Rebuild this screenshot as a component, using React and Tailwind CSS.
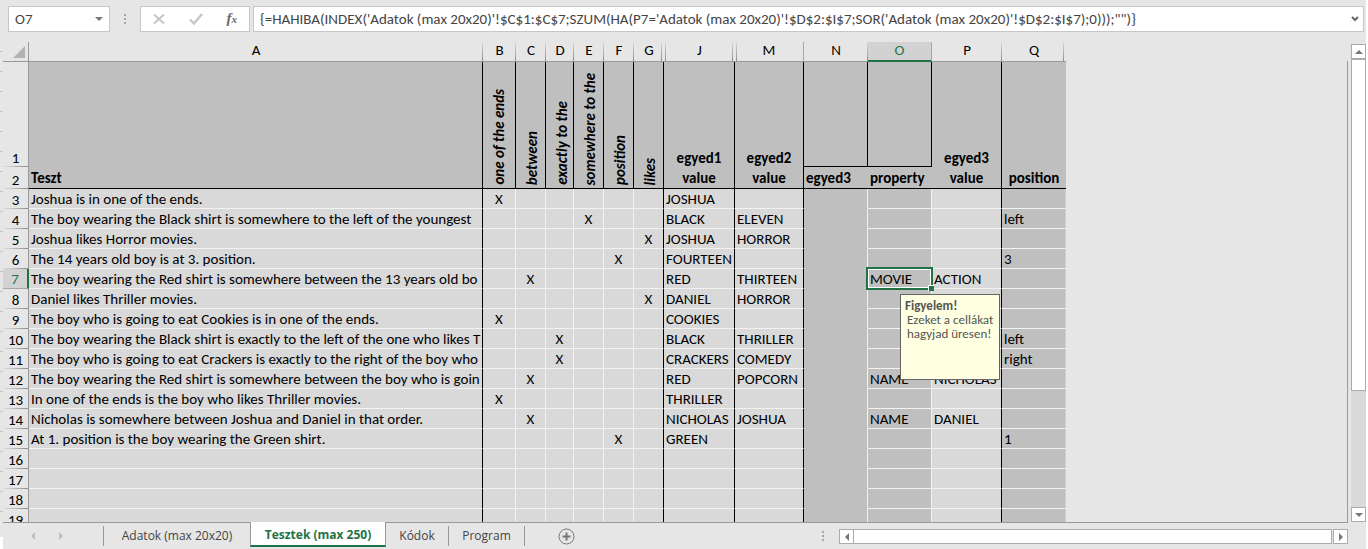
import React from "react";

const SANS = "font-['Carlito','Calibri','Lato',sans-serif]";
const CHROME = "font-['Open_Sans','Noto_Sans',sans-serif]";

const lineRight = "bg-[linear-gradient(to_bottom,#dcdcdc,#8c8c8c)] bg-[length:1px_100%] bg-[position:right_top] bg-no-repeat";
const lineRightInset = "bg-[linear-gradient(to_bottom,#dcdcdc,#8c8c8c)] bg-[length:1px_100%] bg-[position:right_2px_top] bg-no-repeat";
const lineLeft = "bg-[linear-gradient(to_bottom,#dcdcdc,#8c8c8c)] bg-[length:1px_100%] bg-[position:1px_0] bg-no-repeat";
const lineBoth = "bg-[linear-gradient(to_bottom,#dcdcdc,#8c8c8c),linear-gradient(to_bottom,#dcdcdc,#8c8c8c)] bg-[length:1px_100%,1px_100%] bg-[position:1px_0,right_2px_top] bg-no-repeat";

const COLUMNS = [
  { id: "A", width: "w-[454px]", head: lineRight, cell: "border-r-black bg-[#d9d9d9]" },
  { id: "B", width: "w-[33px]", head: lineRight, cell: "border-r-[#f2f2f2] bg-[#d9d9d9]", mark: true },
  { id: "C", width: "w-[30px]", head: lineRight, cell: "border-r-[#f2f2f2] bg-[#d9d9d9]", mark: true },
  { id: "D", width: "w-[28px]", head: lineRight, cell: "border-r-[#f2f2f2] bg-[#d9d9d9]", mark: true },
  { id: "E", width: "w-[30px]", head: lineRight, cell: "border-r-[#f2f2f2] bg-[#d9d9d9]", mark: true },
  { id: "F", width: "w-[30px]", head: lineRight, cell: "border-r-[#f2f2f2] bg-[#d9d9d9]", mark: true },
  { id: "G", width: "w-[30px]", head: lineRightInset, cell: "border-r-black bg-[#d9d9d9]", mark: true },
  { id: "J", width: "w-[71px]", head: lineBoth, cell: "border-r-black bg-[#d9d9d9]" },
  { id: "M", width: "w-[69px]", head: `${lineLeft} border-r border-r-[#a6a6a6]`, cell: "border-r-black bg-[#d9d9d9]" },
  { id: "N", width: "w-[64px]", head: lineRight, cell: "border-r-[#f2f2f2] border-b-[#bfbfbf] bg-[#bfbfbf]" },
  { id: "O", width: "w-[64px]", head: "", cell: "border-r-[#f2f2f2] bg-[#bfbfbf]" },
  { id: "P", width: "w-[70px]", head: lineRight, cell: "border-r-black bg-[#d9d9d9]" },
  { id: "Q", width: "w-[64px]", head: lineRightInset, cell: "border-r-[#d0d0d0] bg-[#bfbfbf]" },
];

const ROWS = [
  { n: 3, A: "Joshua is in one of the ends.", B: "X", J: "JOSHUA" },
  { n: 4, A: "The boy wearing the Black shirt is somewhere to the left of the youngest", E: "X", J: "BLACK", M: "ELEVEN", Q: "left" },
  { n: 5, A: "Joshua likes Horror movies.", G: "X", J: "JOSHUA", M: "HORROR" },
  { n: 6, A: "The 14 years old boy is at 3. position.", F: "X", J: "FOURTEEN", Q: "3" },
  { n: 7, A: "The boy wearing the Red shirt is somewhere between the 13 years old bo", C: "X", J: "RED", M: "THIRTEEN", O: "MOVIE", P: "ACTION" },
  { n: 8, A: "Daniel likes Thriller movies.", G: "X", J: "DANIEL", M: "HORROR" },
  { n: 9, A: "The boy who is going to eat Cookies is in one of the ends.", B: "X", J: "COOKIES" },
  { n: 10, A: "The boy wearing the Black shirt is exactly to the left of the one who likes T", D: "X", J: "BLACK", M: "THRILLER", Q: "left" },
  { n: 11, A: "The boy who is going to eat Crackers is exactly to the right of the boy who", D: "X", J: "CRACKERS", M: "COMEDY", Q: "right" },
  { n: 12, A: "The boy wearing the Red shirt is somewhere between the boy who is goin", C: "X", J: "RED", M: "POPCORN", O: "NAME", P: "NICHOLAS" },
  { n: 13, A: "In one of the ends is the boy who likes Thriller movies.", B: "X", J: "THRILLER" },
  { n: 14, A: "Nicholas is somewhere between Joshua and Daniel in that order.", C: "X", J: "NICHOLAS", M: "JOSHUA", O: "NAME", P: "DANIEL" },
  { n: 15, A: "At 1. position is the boy wearing the Green shirt.", F: "X", J: "GREEN", Q: "1" },
  { n: 16 },
  { n: 17 },
  { n: 18 },
  { n: 19 },
];

const VERTICAL = ["one of the ends", "between", "exactly to the", "somewhere to the", "position", "likes"];

const FORMULA =
  "{=HAHIBA(INDEX('Adatok (max 20x20)'!$C$1:$C$7;SZUM(HA(P7='Adatok (max 20x20)'!$D$2:$I$7;SOR('Adatok (max 20x20)'!$D$2:$I$7);0)));\"\")}";

function Arrow({ dir, className = "fill-[#777]" }) {
  const d = {
    up: "M0 4 4 0l4 4z",
    down: "M0 0h8L4 4z",
    left: "M4 0v8L0 4z",
    right: "M0 0v8l4-4z",
  }[dir];
  const flat = dir === "up" || dir === "down";
  return (
    <svg className={className} width={flat ? 8 : 4} height={flat ? 4 : 8} aria-hidden="true">
      <path d={d} />
    </svg>
  );
}

function Dots() {
  return (
    <svg width="2" height="10" className="fill-[#a6a6a6]" aria-hidden="true">
      <path d="M0 0h2v2H0zM0 4h2v2H0zM0 8h2v2H0z" />
    </svg>
  );
}

function FormulaBar() {
  return (
    <div className="flex h-[42px] shrink-0 items-start pt-[6px] pr-[2px] pl-2 text-[15px] text-[#444]">
      <div className="flex h-[26px] w-[102px] items-center border border-[#c6c6c6] bg-white pr-[6px]">
        <input aria-label="Név mező" defaultValue="O7" className="min-w-0 flex-1 bg-transparent pl-[6px] outline-none" />
        <button aria-label="Nevek listája">
          <Arrow dir="down" />
        </button>
      </div>
      <div className="flex h-[26px] w-[30px] items-center justify-center">
        <Dots />
      </div>
      <div className="flex h-[26px] w-[110px] items-center justify-around border border-[#c6c6c6] bg-white">
        <button aria-label="Mégse">
          <svg width="12" height="12" viewBox="0 0 12 12" className="fill-none stroke-[#c6c6c6] stroke-2" aria-hidden="true">
            <path d="M1 1.5l10 9M11 1.5l-10 9" />
          </svg>
        </button>
        <button aria-label="Beírás">
          <svg width="14" height="12" viewBox="0 0 14 12" className="fill-none stroke-[#c6c6c6] stroke-[2.4]" aria-hidden="true">
            <path d="M1 6.5l4 4L13 1" />
          </svg>
        </button>
        <button aria-label="Függvény beszúrása" className="flex items-baseline pb-[2px] font-['Liberation_Serif',serif] leading-4 font-bold text-[#6a6a6a] italic">
          <span className="text-[15px]">f</span>
          <span className="text-[11px]">x</span>
        </button>
      </div>
      <div className="ml-[3px] flex h-[26px] min-w-0 flex-1 items-center border border-[#c6c6c6] bg-white pr-1">
        <input aria-label="Képlet" defaultValue={FORMULA} className="min-w-0 flex-1 bg-transparent pl-[6px] outline-none" />
        <button aria-label="Szerkesztőléc kibontása">
          <svg width="8" height="6" viewBox="0 0 8 6" className="fill-none stroke-[#666] stroke-2" aria-hidden="true">
            <path d="M1 1l3 3 3-3" />
          </svg>
        </button>
      </div>
    </div>
  );
}

function RowHeader({ n, active }) {
  return (
    <th
      scope="row"
      className={`border-r p-0 align-bottom font-normal ${
        active
          ? "border-r-2 border-b border-r-[#217346] border-b-[#a6a6a6] bg-[#d2d2d2] pt-[2px] leading-[17px] text-[#217346]"
          : "border-r-[#999] bg-[linear-gradient(to_right,#e0e0e0,#8c8c8c)] bg-[length:100%_1px] bg-[position:left_bottom] bg-no-repeat pt-[2px] leading-[18px]"
      }`}
    >
      {n}
    </th>
  );
}

function Selection() {
  return (
    <>
      <div className="pointer-events-none absolute -top-[2px] -right-[2px] -bottom-[2px] -left-[2px] border-2 border-[#217346] ring-1 ring-white ring-inset" />
      <div className="absolute -right-[3px] -bottom-[3px] z-10 size-[6px] border-t border-l border-white bg-[#217346]" />
      <div
        role="tooltip"
        className="absolute top-[25px] left-[32px] z-20 h-[86px] w-[100px] border border-[#666] bg-[#ffffe1] px-1 pt-1 text-[13px] leading-[14px] text-[#555]"
      >
        <p className="font-bold">Figyelem!</p>
        <p className="pl-[2px] whitespace-nowrap">
          Ezeket a cellákat
          <br />
          hagyjad üresen!
        </p>
      </div>
    </>
  );
}

function Sheet() {
  const head = "border-b border-black bg-[#bfbfbf] p-0 align-bottom font-bold leading-[20px]";
  return (
    <table className="w-[1063px] table-fixed border-separate border-spacing-0 text-[15px] text-black">
      <colgroup>
        <col className="w-[26px]" />
        {COLUMNS.map((c) => (
          <col key={c.id} className={c.width} />
        ))}
      </colgroup>
      <thead>
        <tr className="h-[20px]">
          <th className="border-r border-b border-[#999] p-0 align-bottom">
            <button aria-label="Összes kijelölése" className="mr-[3px] mb-[3px] ml-auto block">
              <svg width="12" height="12" className="block fill-[#b2b2b2]" aria-hidden="true">
                <path d="M12 0v12H0z" />
              </svg>
            </button>
          </th>
          {COLUMNS.map((c) => (
            <th
              key={c.id}
              scope="col"
              className={`p-0 text-center align-top leading-[17px] font-normal ${
                c.id === "O"
                  ? "border-r border-b-2 border-r-[#a6a6a6] border-b-[#217346] bg-[#d2d2d2] text-[#217346]"
                  : `border-b border-b-[#999] ${c.head}`
              }`}
            >
              {c.id}
            </th>
          ))}
        </tr>
        <tr className="h-[105px]">
          <RowHeader n={1} />
          <th rowSpan={2} className={`${head} border-r pl-[2px] text-left`}>
            Teszt
          </th>
          {VERTICAL.map((t) => (
            <th key={t} rowSpan={2} className={`${head} border-r pl-[8px]`}>
              <div className="mx-auto mb-[3px] w-[16px] rotate-180 text-left leading-[16px] whitespace-nowrap italic [writing-mode:vertical-rl]">
                {t}
              </div>
            </th>
          ))}
          <th rowSpan={2} className={`${head} border-r`}>
            egyed1
            <br />
            value
          </th>
          <th rowSpan={2} className={`${head} border-r`}>
            egyed2
            <br />
            value
          </th>
          <th className={`${head} border-r`} />
          <th className={`${head} border-r`} />
          <th rowSpan={2} className={`${head} border-r`}>
            egyed3
            <br />
            value
          </th>
          <th rowSpan={2} className={head}>position</th>
        </tr>
        <tr className="h-[22px]">
          <RowHeader n={2} />
          <th className={`${head} pl-[2px] text-left`}>egyed3</th>
          <th className={`${head} pl-[2px] text-left`}>property</th>
        </tr>
      </thead>
      <tbody>
        {ROWS.map((row) => (
          <tr key={row.n} className="h-[20px]">
            <RowHeader n={row.n} active={row.n === 7} />
            {COLUMNS.map((c) => {
              const selected = row.n === 7 && c.id === "O";
              return (
                <td
                  key={c.id}
                  className={`border-r border-b p-0 pt-[2px] leading-[17px] whitespace-nowrap ${c.id === "N" ? "" : "border-b-[#f2f2f2]"} ${c.cell} ${
                    c.mark ? "text-center" : "pl-[2px]"
                  } ${selected ? "relative" : "overflow-hidden"}`}
                >
                  {row[c.id]}
                  {selected && <Selection />}
                </td>
              );
            })}
          </tr>
        ))}
      </tbody>
    </table>
  );
}

function VerticalScrollbar() {
  const btn = "flex h-[15px] items-center justify-center border border-[#ababab] bg-white";
  return (
    <div className="mt-[2px] flex w-[15px] shrink-0 flex-col bg-[#dadada]">
      <button aria-label="Görgetés felfelé" className={btn}>
        <Arrow dir="up" />
      </button>
      <div className="flex-1">
        <div className="h-[74%] border border-[#ababab] bg-white" />
      </div>
      <button aria-label="Görgetés lefelé" className={btn}>
        <Arrow dir="down" />
      </button>
    </div>
  );
}

function TabBar() {
  const tab = "h-full text-[#444]";
  return (
    <nav aria-label="Munkalapok" className={`flex h-[27px] shrink-0 items-start text-[12px] ${CHROME}`}>
      <div className="flex h-full min-w-0 flex-1 border-t border-[#999]">
        <div className="flex w-[100px] items-center gap-6 pl-[28px]">
          <button aria-label="Előző lap">
            <Arrow dir="left" className="fill-[#bdbdbd]" />
          </button>
          <button aria-label="Következő lap">
            <Arrow dir="right" className="fill-[#bdbdbd]" />
          </button>
        </div>
        <div className="mt-[3px] h-[20px] w-px bg-[#999]" />
        <button className={`${tab} w-[146px]`}>Adatok (max 20x20)</button>
        <button
          aria-current="page"
          className="-mt-px h-[25px] w-[136px] border-x border-b-2 border-x-[#999] border-b-[#217346] bg-white pt-[2px] font-bold text-[#217346]"
        >
          Tesztek (max 250)
        </button>
        <button className={`${tab} w-[62px]`}>Kódok</button>
        <div className="mt-[3px] h-[20px] w-px bg-[#999]" />
        <button className={`${tab} w-[75px]`}>Program</button>
        <div className="mt-[3px] h-[20px] w-px bg-[#999]" />
        <button aria-label="Új munkalap" className="ml-[33px]">
          <svg width="17" height="17" viewBox="0 0 17 17" className="fill-none stroke-[#777]" aria-hidden="true">
            <circle cx="8.5" cy="8.5" r="7.5" />
            <path strokeWidth="2" d="M8.5 4.5v8M4.5 8.5h8" />
          </svg>
        </button>
        <div className="ml-auto flex items-center pr-[15px]">
          <Dots />
        </div>
        <div className="mt-[6px] flex h-[15px] w-[509px]">
          <button aria-label="Görgetés balra" className="flex w-[15px] items-center justify-center border border-[#ababab] bg-white">
            <Arrow dir="left" />
          </button>
          <div className="flex-1 border-y border-r border-[#ababab] bg-white" />
          <button aria-label="Görgetés jobbra" className="ml-px flex w-[15px] items-center justify-center border border-[#ababab] bg-white">
            <Arrow dir="right" />
          </button>
        </div>
      </div>
      <div className="w-[18px]" />
    </nav>
  );
}

export default function App() {
  return (
    <div className="h-screen overflow-hidden bg-white pr-[2px]">
      <div className={`flex h-full flex-col bg-[#e6e6e6] ${SANS}`}>
        <FormulaBar />
        <div className="flex min-h-0 flex-1">
          <div className="w-[3px] shrink-0 bg-[repeating-linear-gradient(to_bottom,transparent_0_9px,#c6c6c6_9px_10px,transparent_10px_20px)]" />
          <div className="flex min-h-0 min-w-0 flex-1 overflow-hidden">
            <Sheet />
            <div className="mt-[19px] flex-1 border-r border-[#999]" />
          </div>
          <div className="w-[3px] shrink-0" />
          <VerticalScrollbar />
        </div>
        <div className="flex">
          <div className="mt-[15px] w-[3px] shrink-0 bg-white" />
          <div className="min-w-0 flex-1">
            <TabBar />
          </div>
        </div>
      </div>
    </div>
  );
}
